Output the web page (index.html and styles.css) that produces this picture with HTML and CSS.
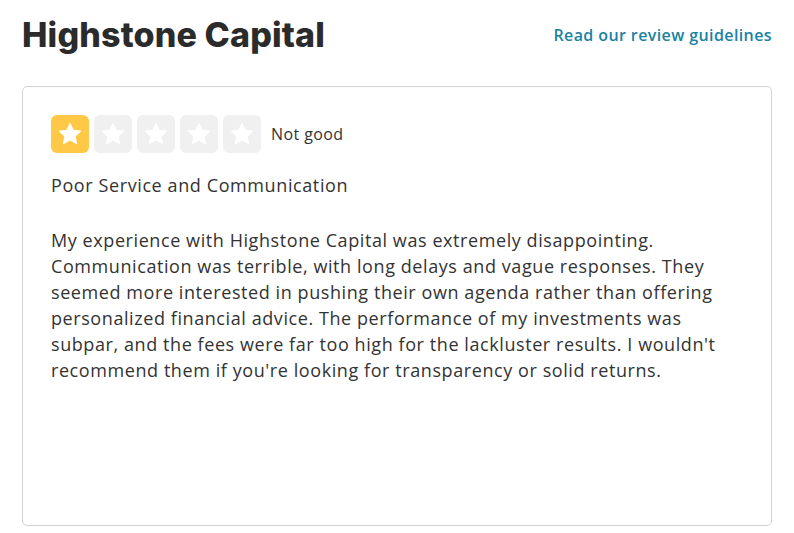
FILE: index.html
```html
<!DOCTYPE html>
<html>
<head>
<meta charset="utf-8">
<link rel="stylesheet" href="styles.css">
</head>
<body>
<div class="page">
  <header class="header">
    <h1 class="title">Highstone Capital</h1>
    <a class="guide" href="#">Read our review guidelines</a>
  </header>
  <section class="card">
    <div class="rating">
      <span class="star on"><svg viewBox="0 0 24 24"><path d="M12 2.5l2.9 6.1 6.6.8-4.9 4.6 1.3 6.6L12 17.3l-5.9 3.3 1.3-6.6-4.9-4.6 6.6-.8z"/></svg></span>
      <span class="star"><svg viewBox="0 0 24 24"><path d="M12 2.5l2.9 6.1 6.6.8-4.9 4.6 1.3 6.6L12 17.3l-5.9 3.3 1.3-6.6-4.9-4.6 6.6-.8z"/></svg></span>
      <span class="star"><svg viewBox="0 0 24 24"><path d="M12 2.5l2.9 6.1 6.6.8-4.9 4.6 1.3 6.6L12 17.3l-5.9 3.3 1.3-6.6-4.9-4.6 6.6-.8z"/></svg></span>
      <span class="star"><svg viewBox="0 0 24 24"><path d="M12 2.5l2.9 6.1 6.6.8-4.9 4.6 1.3 6.6L12 17.3l-5.9 3.3 1.3-6.6-4.9-4.6 6.6-.8z"/></svg></span>
      <span class="star"><svg viewBox="0 0 24 24"><path d="M12 2.5l2.9 6.1 6.6.8-4.9 4.6 1.3 6.6L12 17.3l-5.9 3.3 1.3-6.6-4.9-4.6 6.6-.8z"/></svg></span>
      <span class="label">Not good</span>
    </div>
    <h2 class="review-title">Poor Service and Communication</h2>
    <p class="review-body">My experience with Highstone Capital was extremely disappointing. Communication was terrible, with long delays and vague responses. They seemed more interested in pushing their own agenda rather than offering personalized financial advice. The performance of my investments was subpar, and the fees were far too high for the lackluster results. I wouldn't recommend them if you're looking for transparency or solid returns.</p>
  </section>
</div>
</body>
</html>
```
FILE: styles.css
```css
* { box-sizing: border-box; }
body {
  margin: 0;
  background: #fff;
  font-family: "Open Sans", "Liberation Sans", sans-serif;
  color: #333;
}
.page {
  padding: 14px 22px 0 22px;
}
.header {
  display: flex;
  justify-content: space-between;
  align-items: center;
}
.title {
  margin: 0;
  font-family: Inter, "Liberation Sans", sans-serif;
  font-weight: 800;
  font-size: 34px;
  line-height: 42px;
  color: #2b2b2b;
  letter-spacing: 0.15px;
}
.guide {
  font-size: 16px;
  font-weight: 600;
  color: #1a82a3;
  text-decoration: none;
  letter-spacing: 0.4px;
}
.card {
  margin-top: 30px;
  border: 1px solid #d3d3d3;
  border-radius: 5px;
  height: 440px;
  padding: 28px 28px;
}
.rating {
  display: flex;
  align-items: center;
  gap: 5px;
}
.star {
  width: 38px;
  height: 38px;
  border-radius: 6px;
  background: #f0f0f0;
  display: flex;
  align-items: center;
  justify-content: center;
}
.star.on { background: #ffc846; }
.star svg {
  width: 26px;
  height: 26px;
  fill: #fff;
  stroke: #fff;
  stroke-width: 1.2;
  stroke-linejoin: round;
}
.label {
  margin-left: 5px;
  font-size: 16px;
  color: #333;
  letter-spacing: 0.4px;
}
.review-title {
  margin: 19px 0 0;
  font-size: 18px;
  font-weight: 400;
  line-height: 26px;
  color: #333;
  letter-spacing: 0.6px;
}
.review-body {
  margin: 29px 0 0;
  font-size: 18px;
  line-height: 26px;
  color: #333;
  letter-spacing: 0.58px;
}
```
